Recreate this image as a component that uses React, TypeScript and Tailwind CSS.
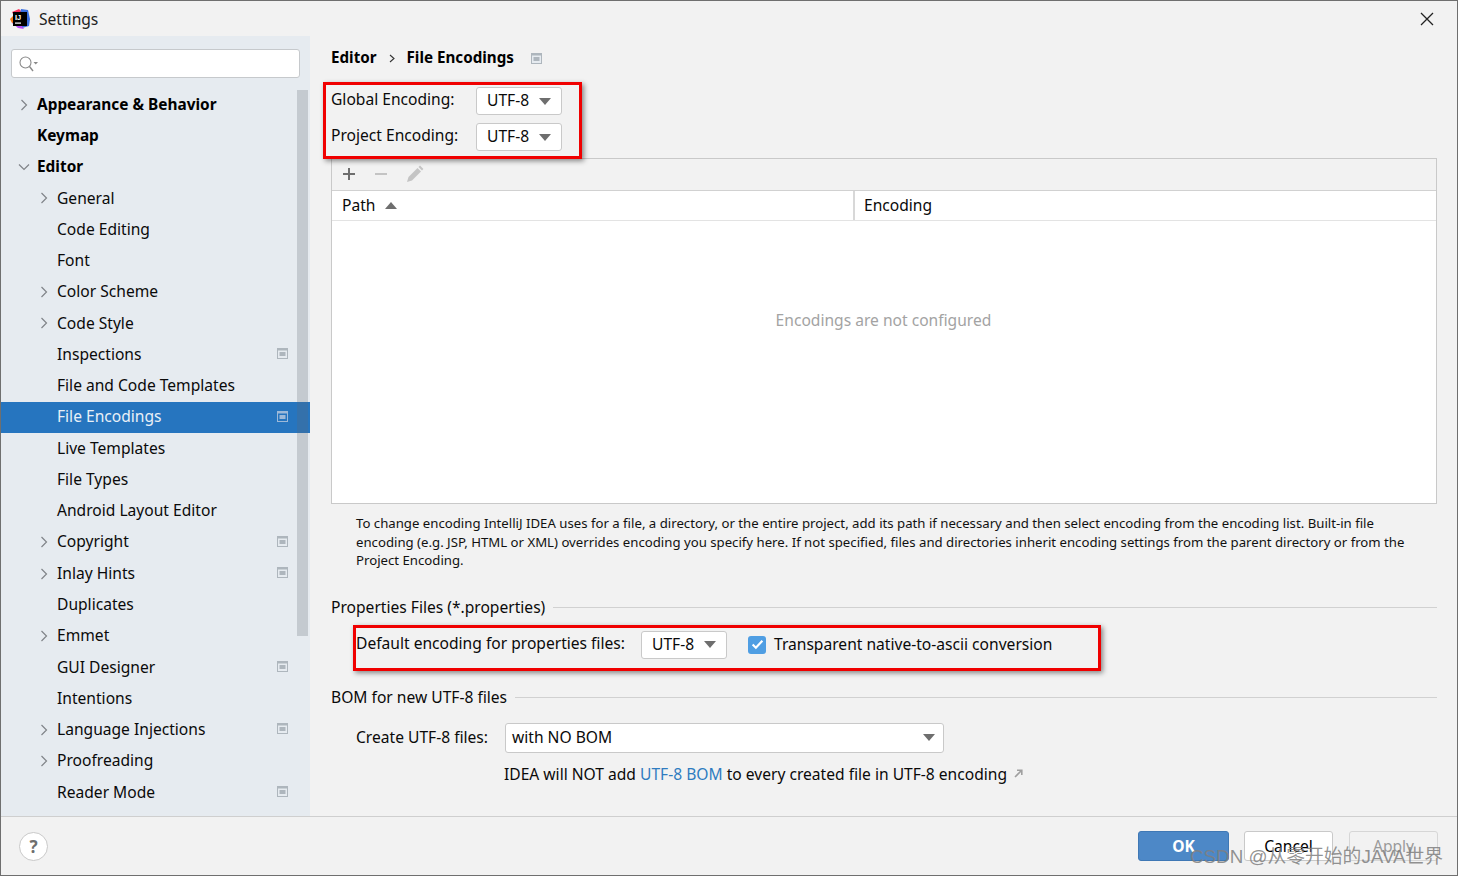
import React from "react";

const items: [string, number, boolean, boolean, boolean][] = [
  ["Appearance & Behavior", 0, true, false, true],
  ["Keymap", 0, false, false, true],
  ["Editor", 0, true, false, true],
  ["General", 1, true, false, false],
  ["Code Editing", 1, false, false, false],
  ["Font", 1, false, false, false],
  ["Color Scheme", 1, true, false, false],
  ["Code Style", 1, true, false, false],
  ["Inspections", 1, false, true, false],
  ["File and Code Templates", 1, false, false, false],
  ["File Encodings", 1, false, true, false],
  ["Live Templates", 1, false, false, false],
  ["File Types", 1, false, false, false],
  ["Android Layout Editor", 1, false, false, false],
  ["Copyright", 1, true, true, false],
  ["Inlay Hints", 1, true, true, false],
  ["Duplicates", 1, false, false, false],
  ["Emmet", 1, true, false, false],
  ["GUI Designer", 1, false, true, false],
  ["Intentions", 1, false, false, false],
  ["Language Injections", 1, true, true, false],
  ["Proofreading", 1, true, false, false],
  ["Reader Mode", 1, false, true, false],
];

function ModuleIcon({ selected }: { selected?: boolean }) {
  return (
    <svg width="11" height="11" viewBox="0 0 11 11" className="shrink-0">
      <rect x="0" y="0" width="11" height="11" fill={selected ? "#9db9d8" : "#aeb6bd"} />
      <rect x="1" y="2.5" width="9" height="7.5" fill={selected ? "#2675bf" : "#e6ebf0"} />
      <rect x="2.5" y="4" width="6" height="4" fill={selected ? "#9db9d8" : "#aeb6bd"} />
    </svg>
  );
}

function Chevron({ down }: { down?: boolean }) {
  return (
    <svg width="12" height="12" viewBox="0 0 12 12" fill="none" stroke="#808488" strokeWidth="1.2">
      {down ? <path d="M1 3.5 L6 8.5 L11 3.5" /> : <path d="M3.5 1 L8.5 6 L3.5 11" />}
    </svg>
  );
}

function Caret({ color = "#6e6e6e" }: { color?: string }) {
  return (
    <svg width="12" height="7" viewBox="0 0 12 7" className="shrink-0">
      <path d="M0 0 H12 L6 7 Z" fill={color} />
    </svg>
  );
}

function Combo({ w = "w-[86px]" }: { w?: string }) {
  return (
    <div className={`${w} h-[28px] bg-white border border-[#c9c9c9] rounded-[3px] flex items-center pl-[10px] pr-[10px] justify-between text-[#0a0a0a]`}>
      <span>UTF-8</span>
      <Caret />
    </div>
  );
}

function Logo() {
  return (
    <svg width="20" height="20" viewBox="0 0 20 20" className="shrink-0">
      <polygon points="2,3 9,0 12,3 5,9" fill="#fe315d" />
      <polygon points="0,10 4,6 6,14 2,14" fill="#f97a12" />
      <polygon points="11,0 18,1 20,10 19,17 12,19 9,10" fill="#3a6fe0" />
      <polygon points="2,14 8,19 14,20 8,12" fill="#b74af7" />
      <rect x="3" y="3" width="14" height="14" fill="#000" />
      <rect x="5" y="13.5" width="6" height="1.2" fill="#fff" />
      <text x="5" y="11" fontSize="7.5" fontWeight="700" fill="#fff" fontFamily="Liberation Sans, sans-serif">IJ</text>
    </svg>
  );
}

export default function App() {
  return (
    <div
      className="relative w-[1458px] h-[876px] overflow-hidden bg-[#f2f2f2] border-t border-l border-r border-[#6f6f6f] flex flex-col text-[15.6px] text-[#0a0a0a] leading-none"
      style={{ fontFamily: '"Noto Sans", "Open Sans", "Noto Sans CJK SC", sans-serif' }}
    >
      {/* title bar */}
      <div className="h-[35px] shrink-0 flex items-center pl-[9px] pr-[23px] gap-[9px]">
        <Logo />
        <span className="text-[#222] mt-[2px]">Settings</span>
        <svg width="14" height="14" viewBox="0 0 14 14" className="ml-auto" stroke="#222" strokeWidth="1.3">
          <path d="M1 1 L13 13 M13 1 L1 13" />
        </svg>
      </div>

      <div className="flex h-[780px] shrink-0">
        {/* sidebar */}
        <div className="relative w-[309px] shrink-0 bg-[#e6ebf0] flex flex-col">
          <div className="mt-[13px] ml-[10px] w-[289px] h-[29px] shrink-0 bg-white border border-[#c6c9cc] rounded-[3px] flex items-center pl-[7px]">
            <svg width="20" height="16" viewBox="0 0 20 16" fill="none" stroke="#8a8a8a" strokeWidth="1.1">
              <circle cx="6.5" cy="6.5" r="5.5" />
              <path d="M10.5 10.5 L14 15" strokeWidth="1.4" />
              <path d="M14.5 6 H19 L16.75 8.5 Z" fill="#8a8a8a" stroke="none" />
            </svg>
          </div>
          <div className="mt-[10.9px] flex flex-col">
            {items.map(([label, level, arrow, mod, bold]) => {
              const selected = label === "File Encodings";
              return (
                <div
                  key={label}
                  className={`h-[31.27px] shrink-0 flex items-center pr-[22px] ${selected ? "bg-[#2675bf] text-[#e9f0f7]" : ""}`}
                >
                  <div className={`shrink-0 flex items-center justify-center w-[12px] ${level === 0 ? "ml-[17px] mr-[7px]" : "ml-[37px] mr-[7px]"}`}>
                    {arrow && <Chevron down={label === "Editor"} />}
                  </div>
                  <span className={bold ? "font-bold text-black text-[15.4px]" : ""}>{label}</span>
                  {mod && <span className="ml-auto -mt-[2px]"><ModuleIcon selected={selected} /></span>}
                </div>
              );
            })}
          </div>
          {/* scrollbar */}
          <div className="absolute left-[296px] top-[54px] w-[11px] h-[546px] bg-[#5f6770]/25" />
        </div>

        {/* main */}
        <div className="flex-1 min-w-0 pl-[21px] pr-[20px] flex flex-col">
          <div className="h-[16px] mt-[14px] flex items-center font-bold text-black text-[15.2px]">
            <span>Editor</span>
            <svg width="6" height="9" viewBox="0 0 6 9" className="ml-[12px] mr-[12px]" fill="none" stroke="#333" strokeWidth="1.1">
              <path d="M1 1 L5 4.5 L1 8" />
            </svg>
            <span>File Encodings</span>
            <span className="ml-[17px]"><ModuleIcon /></span>
          </div>

          <div className="mt-[21px] flex items-center h-[28px]">
            <span className="w-[145px] -mt-[3px]">Global Encoding:</span>
            <Combo />
          </div>
          <div className="mt-[8px] flex items-center h-[28px]">
            <span className="w-[145px] -mt-[3px]">Project Encoding:</span>
            <Combo />
          </div>

          {/* table */}
          <div className="mt-[7px] h-[346px] shrink-0 border border-[#c9c9c9] flex flex-col bg-white">
            <div className="h-[32px] shrink-0 bg-[#f2f2f2] border-b border-[#d1d1d1] flex items-center pb-[2px] pl-[10px] gap-[18px]">
              <svg width="14" height="14" viewBox="0 0 14 14" stroke="#6e6e6e" strokeWidth="2">
                <path d="M7 1 V13 M1 7 H13" />
              </svg>
              <svg width="14" height="14" viewBox="0 0 14 14" stroke="#c4c4c4" strokeWidth="2">
                <path d="M1 7 H13" />
              </svg>
              <svg width="18" height="18" viewBox="0 0 18 18">
                <path d="M1 17 L2.5 12 L11.5 3 L15 6.5 L6 15.5 Z" fill="#c4c4c4" />
                <path d="M12.5 2 L14 0.6 L17.4 4 L16 5.5 Z" fill="#c4c4c4" />
              </svg>
            </div>
            <div className="h-[30px] shrink-0 border-b border-[#e3e3e3] flex items-center">
              <div className="w-[523px] h-full border-r-2 border-[#d8d8d8] flex items-center pl-[10px] gap-[10px]">
                <span>Path</span>
                <svg width="12" height="7" viewBox="0 0 12 7"><path d="M0 7 H12 L6 0 Z" fill="#6e6e6e" /></svg>
              </div>
              <span className="pl-[9px]">Encoding</span>
            </div>
            <div className="flex-1 flex items-center justify-center pb-[83px] text-[#a3a3a3]">
              <span className="ml-[-1px]">Encodings are not configured</span>
            </div>
          </div>

          <div className="mt-[10px] pl-[25px] text-[13.2px] leading-[18.5px] text-[#111]">
            <p className="whitespace-nowrap">To change encoding IntelliJ IDEA uses for a file, a directory, or the entire project, add its path if necessary and then select encoding from the encoding list. Built-in file</p>
            <p className="whitespace-nowrap">encoding (e.g. JSP, HTML or XML) overrides encoding you specify here. If not specified, files and directories inherit encoding settings from the parent directory or from the</p>
            <p className="whitespace-nowrap">Project Encoding.</p>
          </div>

          <div className="mt-[28px] h-[20px] flex items-center gap-[8px]">
            <span className="whitespace-nowrap">Properties Files (*.properties)</span>
            <div className="flex-1 h-px bg-[#d1d1d1]" />
          </div>

          <div className="mt-[13px] pl-[25px] h-[28px] flex items-center">
            <span className="w-[285px] -mt-[2px] whitespace-nowrap">Default encoding for properties files:</span>
            <Combo />
            <div className="ml-[21px] w-[18px] h-[18px] rounded-[3px] bg-[#4f9ee3] flex items-center justify-center">
              <svg width="13" height="11" viewBox="0 0 12 10" fill="none" stroke="#fff" strokeWidth="2">
                <path d="M1.5 5 L4.5 8 L10.5 1.5" />
              </svg>
            </div>
            <span className="ml-[8px]">Transparent native-to-ascii conversion</span>
          </div>

          <div className="mt-[29px] h-[20px] flex items-center gap-[8px]">
            <span className="whitespace-nowrap">BOM for new UTF-8 files</span>
            <div className="flex-1 h-px bg-[#d1d1d1]" />
          </div>

          <div className="mt-[15px] pl-[25px] h-[30px] flex items-center">
            <span className="w-[149px] whitespace-nowrap">Create UTF-8 files:</span>
            <div className="w-[439px] h-[30px] bg-white border border-[#c9c9c9] rounded-[3px] flex items-center justify-between pl-[6px] pr-[8px]">
              <span>with NO BOM</span>
              <Caret />
            </div>
          </div>

          <div className="mt-[12px] ml-[173px] h-[20px] flex items-center whitespace-nowrap">
            <span>IDEA will NOT add&nbsp;</span>
            <span className="text-[#2f7cc0]">UTF-8 BOM</span>
            <span>&nbsp;to every created file in UTF-8 encoding</span>
            <svg width="9" height="9" viewBox="0 0 9 9" className="ml-[7px] -mt-[2px]" fill="none" stroke="#a0a0a0" strokeWidth="1.6">
              <path d="M1 8 L7.5 1.5 M3 1.2 H7.8 V6" />
            </svg>
          </div>
        </div>
      </div>

      {/* footer */}
      <div className="flex-1 border-t border-[#cfcfcf] flex items-start pt-[14px] pl-[18px] pr-[19px]">
        <div className="w-[29px] h-[29px] mt-[1px] rounded-full bg-white border border-[#c9c9c9] flex items-center justify-center font-bold text-[#6e6e6e] text-[17px]">?</div>
        <div className="ml-auto w-[91px] h-[30px] pt-[2px] rounded-[3px] bg-[#4d88c7] border border-[#3f78b5] flex items-center justify-center font-bold text-white">OK</div>
        <div className="ml-[15px] w-[89px] h-[30px] pt-[2px] rounded-[3px] bg-white border border-[#c9c9c9] flex items-center justify-center text-black">Cancel</div>
        <div className="ml-[16px] w-[89px] h-[30px] pt-[2px] rounded-[3px] border border-[#d6d6d6] flex items-center justify-center text-[#9a9a9a]">Apply</div>
      </div>

      {/* bottom edge */}
      <div className="absolute left-0 right-0 bottom-0 h-px bg-[#6f6f6f]" />

      {/* annotation boxes */}
      <div className="absolute left-[322px] top-[81px] w-[259px] h-[77px] border-[3px] border-[#f00000] shadow-[2px_2px_5px_rgba(0,0,0,0.45)]" />
      <div className="absolute left-[352px] top-[624px] w-[748px] h-[46px] border-[3px] border-[#f00000] shadow-[2px_2px_5px_rgba(0,0,0,0.45)]" />

      {/* watermark */}
      <div
        className="absolute left-[1189px] top-[847px] text-[18.8px] whitespace-nowrap text-[#7f7f7f]/85"
        style={{ fontFamily: '"Liberation Sans", "Noto Sans CJK SC", sans-serif' }}
      >
        CSDN @从零开始的JAVA世界
      </div>
    </div>
  );
}
